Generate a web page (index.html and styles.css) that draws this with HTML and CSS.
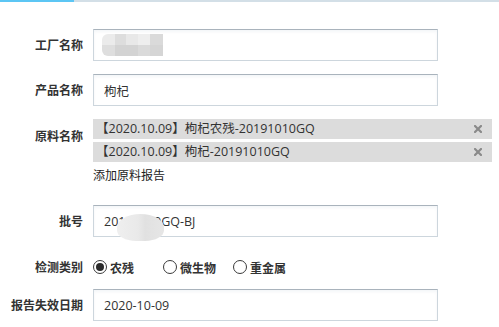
FILE: index.html
```html
<!DOCTYPE html>
<html lang="zh-CN">
<head>
    <meta charset="UTF-8">
    <meta name="viewport" content="width=device-width, initial-scale=1.0">
    <title>检测报告</title>
    <link rel="stylesheet" href="styles.css">
</head>
<body>
    <div class="progress"><div class="progress-bar" style="width: 74px"></div></div>

    <form class="report-form" action="" method="post">
        <div class="row">
            <label class="row-label" for="factory">工厂名称</label>
            <div class="field">
                <input class="text-input" type="text" id="factory" name="factory" value="">
                <div class="mosaic">
                    <span class="m1"></span><span class="m2"></span><span class="m3"></span><span class="m4"></span><span class="m5"></span>
                    <span class="m6"></span><span class="m7"></span><span class="m8"></span><span class="m9"></span><span class="m10"></span>
                </div>
            </div>
        </div>

        <div class="row">
            <label class="row-label" for="product">产品名称</label>
            <div class="field">
                <input class="text-input" type="text" id="product" name="product" value="枸杞">
            </div>
        </div>

        <div class="row row-top">
            <label class="row-label label-top">原料名称</label>
            <div class="materials">
                <div class="tag">
                    <span>【2020.10.09】枸杞农残-20191010GQ</span>
                    <svg class="tag-close" width="8" height="8" viewBox="0 0 8 8"><path d="M1 1 L7 7 M7 1 L1 7" stroke="#8a8a8a" stroke-width="2.2" stroke-linecap="square"/></svg>
                </div>
                <div class="tag">
                    <span>【2020.10.09】枸杞-20191010GQ</span>
                    <svg class="tag-close" width="8" height="8" viewBox="0 0 8 8"><path d="M1 1 L7 7 M7 1 L1 7" stroke="#8a8a8a" stroke-width="2.2" stroke-linecap="square"/></svg>
                </div>
                <a class="add-link">添加原料报告</a>
            </div>
        </div>

        <div class="row row-batch">
            <label class="row-label" for="batch">批号</label>
            <div class="field">
                <input class="text-input" type="text" id="batch" name="batch" value="20191010GQ-BJ">
                <div class="blur-spot"></div>
            </div>
        </div>

        <div class="row row-radio">
            <span class="row-label">检测类别</span>
            <div class="radios">
                <label class="radio"><span class="dot checked"></span>农残</label>
                <label class="radio"><span class="dot"></span>微生物</label>
                <label class="radio"><span class="dot"></span>重金属</label>
            </div>
        </div>

        <div class="row">
            <label class="row-label" for="expire">报告失效日期</label>
            <div class="field">
                <input class="text-input" type="text" id="expire" name="expire" value="2020-10-09">
            </div>
        </div>
    </form>
</body>
</html>
```

FILE: styles.css
```css
body {
    margin: 0;
    font-family: "Open Sans", "Noto Sans CJK SC", sans-serif;
    font-size: 12.5px;
    color: #333;
    background: #fff;
}

.progress {
    height: 2px;
    background: #d3dfe7;
}

.progress-bar {
    height: 100%;
    background: #5cc6f4;
}

.report-form {
    padding-top: 27px;
}

.row {
    display: grid;
    grid-template-columns: 83px auto;
    column-gap: 10px;
    align-items: center;
    margin-bottom: 13px;
}

.row-top {
    align-items: start;
    margin-top: 1px;
    margin-bottom: 22px;
}

.row-label {
    text-align: right;
    font-family: "Noto Sans CJK SC", sans-serif;
    font-size: 12px;
    font-weight: bold;
    line-height: 16px;
    color: #333;
    white-space: nowrap;
}

.label-top {
    padding-top: 9px;
}

.field {
    position: relative;
    width: 345px;
}

.text-input {
    display: block;
    box-sizing: border-box;
    width: 345px;
    height: 32px;
    padding: 0 10px;
    border: 1px solid #cdd6dd;
    border-top-color: #a9b3bc;
    box-shadow: inset 0 2px 3px rgba(120, 140, 160, 0.08);
    font-family: "Open Sans", "Noto Sans CJK SC", sans-serif;
    font-size: 12.5px;
    color: #333;
    outline: none;
}

.mosaic {
    position: absolute;
    left: 9px;
    top: 5px;
    display: grid;
    grid-template-columns: 13px 11px 12px 12px 13px;
    grid-template-rows: 11px 11px;
}

.mosaic .m1 { background: #ebebeb; border-top-left-radius: 6px; }
.mosaic .m2 { background: #dddddd; }
.mosaic .m3 { background: #e8e8e8; }
.mosaic .m4 { background: #eeeeee; }
.mosaic .m5 { background: #dadada; }
.mosaic .m6 { background: #dedede; border-bottom-left-radius: 6px; }
.mosaic .m7 { background: #d3d3d3; }
.mosaic .m8 { background: #d3d3d3; }
.mosaic .m9 { background: #dadada; }
.mosaic .m10 { background: #d5d5d5; }

.materials {
    display: flex;
    flex-direction: column;
    gap: 3px;
    width: 399px;
}

.tag {
    display: flex;
    align-items: center;
    justify-content: space-between;
    height: 20px;
    padding: 0 10px 0 3px;
    background: #dcdcdc;
    line-height: 20px;
    white-space: nowrap;
}

.tag-close {
    display: block;
}

.add-link {
    margin-top: 2px;
    font-family: "Noto Sans CJK SC", sans-serif;
    font-size: 12px;
    line-height: 16px;
    color: #222;
    cursor: pointer;
}

.blur-spot {
    position: absolute;
    left: 24px;
    top: 9px;
    width: 47px;
    height: 27px;
    border-radius: 50% 50% 40% 40%;
    background: linear-gradient(90deg, #efefef 0%, #e9e9e9 45%, #e1e1e1 60%, #e6e6e6 100%);
}

.row-radio {
    margin-top: 20px;
    margin-bottom: 12px;
}

.radios {
    display: flex;
    align-items: center;
    height: 20px;
}

.radio {
    display: flex;
    align-items: center;
    min-width: 70px;
    font-family: "Noto Sans CJK SC", sans-serif;
    font-size: 12px;
    font-weight: bold;
    color: #333;
}

.dot {
    box-sizing: border-box;
    width: 14px;
    height: 14px;
    margin-right: 3px;
    border: 1px solid #3a3a3a;
    border-radius: 50%;
    position: relative;
}

.dot.checked::after {
    content: "";
    position: absolute;
    left: 2px;
    top: 2px;
    width: 8px;
    height: 8px;
    border-radius: 50%;
    background: #2a2a2a;
}
```
